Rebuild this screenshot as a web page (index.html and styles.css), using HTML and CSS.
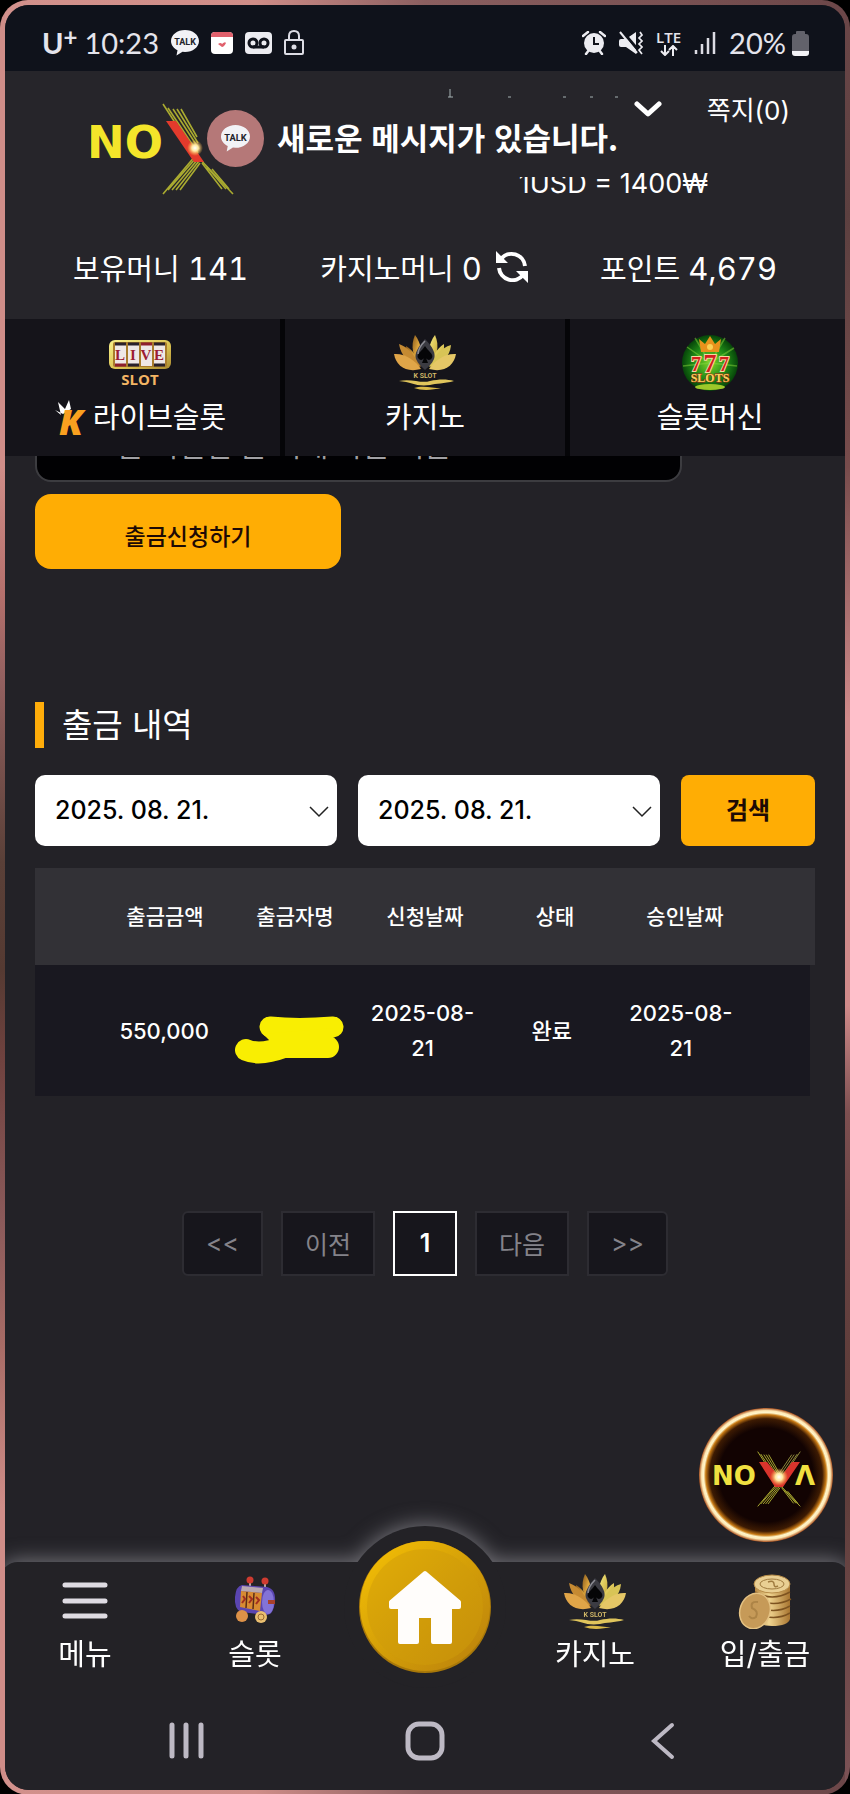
FILE: index.html
```html
<!DOCTYPE html>
<html lang="ko">
<head>
    <meta charset="UTF-8">
    <meta name="viewport" content="width=device-width, initial-scale=1">
    <title>출금 내역</title>
    <link rel="stylesheet" href="styles.css">
</head>
<body>
    <!-- 공용 아이콘 -->
    <svg class="defs" width="0" height="0" aria-hidden="true">
        <defs>
            <linearGradient id="gold" x1="0" y1="0" x2="1" y2="1">
                <stop offset="0" stop-color="#8a5a1c"/>
                <stop offset="0.5" stop-color="#e0a83e"/>
                <stop offset="1" stop-color="#9a6420"/>
            </linearGradient>
            <linearGradient id="goldLight" x1="0" y1="0" x2="1" y2="1">
                <stop offset="0" stop-color="#f7f08a"/>
                <stop offset="0.6" stop-color="#d9c050"/>
                <stop offset="1" stop-color="#a98a30"/>
            </linearGradient>
            <linearGradient id="coin" x1="0" y1="0" x2="1" y2="0">
                <stop offset="0" stop-color="#b98a45"/>
                <stop offset="0.4" stop-color="#f0d591"/>
                <stop offset="1" stop-color="#a87530"/>
            </linearGradient>
            <linearGradient id="homeGold" x1="0" y1="0" x2="1" y2="1">
                <stop offset="0" stop-color="#f7c205"/>
                <stop offset="0.5" stop-color="#d49f08"/>
                <stop offset="1" stop-color="#b97f0c"/>
            </linearGradient>
            <radialGradient id="greenBall">
                <stop offset="0" stop-color="#7fd42a"/>
                <stop offset="0.6" stop-color="#1f8a17"/>
                <stop offset="1" stop-color="#064409"/>
            </radialGradient>
            <radialGradient id="neon">
                <stop offset="0.7" stop-color="#120302"/>
                <stop offset="0.84" stop-color="#3d1b03"/>
                <stop offset="0.9" stop-color="#c87a14"/>
                <stop offset="0.93" stop-color="#fff6cc"/>
                <stop offset="0.96" stop-color="#ffe9b4"/>
                <stop offset="1" stop-color="#a8501e"/>
            </radialGradient>
            <radialGradient id="flare">
                <stop offset="0" stop-color="#ffffff"/>
                <stop offset="0.4" stop-color="#ffe9a0"/>
                <stop offset="1" stop-color="#ffb040" stop-opacity="0"/>
            </radialGradient>
        </defs>
        <symbol id="lotus" viewBox="0 0 62 56">
            <path d="M12 12C19 16 24 24 27 33C19 29 12 22 12 12Z" fill="url(#gold)"/>
            <path d="M21 1C27 9 29 19 27 32C19 24 16 12 21 1Z" fill="url(#gold)"/>
            <path d="M5 10C14 13 22 22 26 33C14 29 7 22 5 10Z" fill="#c58a32"/>
            <path d="M0 20C11 19 22 27 27 35C12 39 2 32 0 20Z" fill="#e0a548"/>
            <path d="M41 1C35 9 33 19 35 32C43 24 46 12 41 1Z" fill="url(#goldLight)"/>
            <path d="M50 10C42 15 38 24 35 33C45 27 51 21 50 10Z" fill="url(#goldLight)"/>
            <path d="M57 11C47 14 40 22 36 33C48 29 56 23 57 11Z" fill="#d8c456"/>
            <path d="M62 20C51 19 40 27 35 35C50 39 60 32 62 20Z" fill="#e5c766"/>
            <path d="M31 5C39 13 42 20 40 25C38 30 34 33 31 36C28 33 24 30 22 25C20 20 24 13 31 5Z" fill="#3b3b42"/>
            <path d="M31 12C34 17 40 20 38 24C36 27 33 26 32 24L34 29H28L30 24C29 26 26 27 24 24C22 20 28 17 31 12Z" fill="#050507"/>
            <path d="M31 7C27 11 24 15 24 20" stroke="#8c8c94" stroke-width="1.5" fill="none"/>
            <text x="31" y="44" text-anchor="middle" class="lotus-text">K SLOT</text>
            <path d="M5 47C18 44 27 50 36 47C45 45 53 45 60 47C50 50 42 49 36 51C22 53 18 48 5 47Z" fill="#e0c55c"/>
            <path d="M20 54C29 51 38 54 47 54C39 56 28 57 20 54Z" fill="#d9b948"/>
        </symbol>
        <symbol id="rays" viewBox="0 0 72 92">
            <g stroke="#a9aa30" stroke-width="1.600" fill="none">
                <path d="M1 1L34 52L71 91M6 5L36 50M11 6L37 46M15 6L36 40M19 6L35 34"/>
                <path d="M1 91L34 52M6 87L34 55M10 87L36 56M14 87L37 58M18 87L38 60"/>
                <path d="M40 60L60 86M45 64L64 86M50 66L67 86"/>
            </g>
        </symbol>
        <symbol id="talk" viewBox="0 0 28 26">
            <path d="M14 0C21.700 0 28 4.800 28 11C28 17.200 21.700 22 14 22L11.500 21.800L5.500 25.500L6.500 20.200C2.600 18.200 0 15 0 11C0 4.800 6.300 0 14 0Z" fill="#f2f2f6"/>
            <text x="14" y="15" text-anchor="middle" class="talk-text">TALK</text>
        </symbol>
    </svg>

    <div class="phone">
    <div class="screen">
    <div class="page">
        <div class="status">
            <div class="status-side">
                <span class="carrier">U<sup>+</sup></span>
                <span class="clock">10:23</span>
                <svg width="28" height="26"><use href="#talk"/></svg>
                <svg width="22" height="22" viewBox="0 0 22 22">
                    <rect width="22" height="22" rx="4" fill="#fff"/>
                    <path d="M0 5V4Q0 0 4 0H18Q22 0 22 4V5Z" fill="#e0606c"/>
                    <path d="M7 12Q10 10 11 12Q14 9 15 11Q13 15 11 15Z" fill="#e0606c"/>
                </svg>
                <svg width="27" height="22" viewBox="0 0 27 22">
                    <rect width="27" height="22" rx="4" fill="#ececf1"/>
                    <circle cx="8" cy="11" r="4" fill="none" stroke="#10131c" stroke-width="3"/>
                    <circle cx="19" cy="11" r="4" fill="none" stroke="#10131c" stroke-width="3"/>
                    <path d="M8 15H19" stroke="#10131c" stroke-width="3"/>
                </svg>
                <svg width="20" height="26" viewBox="0 0 20 26">
                    <rect x="1" y="10" width="18" height="14" rx="1" fill="none" stroke="#dcdce4" stroke-width="2"/>
                    <path d="M5 10V6Q5 1 10 1T15 6V10" fill="none" stroke="#dcdce4" stroke-width="2"/>
                    <circle cx="10" cy="17" r="2.500" fill="#dcdce4"/>
                </svg>
            </div>
            <div class="status-side right">
                <svg width="24" height="24" viewBox="0 0 24 24">
                    <circle cx="12" cy="12" r="10" fill="#ececf1"/>
                    <path d="M12 6V13H17" fill="none" stroke="#10131c" stroke-width="2"/>
                    <path d="M1 5L6 1M23 5L18 1M4 23L7 19M20 23L17 19" stroke="#ececf1" stroke-width="2.500" stroke-linecap="round"/>
                </svg>
                <svg width="24" height="24" viewBox="0 0 24 24">
                    <path d="M0 10Q0 8 2 8H7L17 1V23L7 16H2Q0 16 0 14Z" fill="#ececf1"/>
                    <path d="M3 0L20 20" stroke="#0f121b" stroke-width="3"/>
                    <path d="M1 1L18 22" stroke="#ececf1" stroke-width="2"/>
                    <path d="M21 1L23 4L20 7L23 10L20 13L23 16L20 19L23 23" fill="none" stroke="#ececf1" stroke-width="1.700"/>
                </svg>
                <span class="lte">LTE
                    <svg width="18" height="11" viewBox="0 0 18 11"><path d="M5 0V10M1 6L5 10L9 6M13 11V1M9 5L13 1L17 5" fill="none" stroke="#ececf1" stroke-width="2"/></svg>
                </span>
                <svg width="22" height="24" viewBox="0 0 22 24"><path d="M2 19V23M8 13V23M14 7V23M20 1V23" stroke="#dcdce4" stroke-width="2.500"/></svg>
                <span class="battery-text">20%</span>
                <svg class="battery" width="17" height="25" viewBox="0 0 17 25">
                    <path d="M4 3V1Q4 0 5 0H12Q13 0 13 1V3H14Q17 3 17 6V20H0V6Q0 3 3 3Z" fill="#62626b"/>
                    <path d="M0 20H17V22Q17 25 14 25H3Q0 25 0 22Z" fill="#f2f2f6"/>
                </svg>
            </div>
        </div>

        <header class="header">
            <div class="top">
                <a href="#" class="logo" aria-label="NOVA">
                    <svg width="146" height="92" viewBox="0 0 146 92">
                        <text x="-4" y="55" class="logo-text">NO</text>
                        <svg x="71" y="0" width="72" height="92"><use href="#rays"/></svg>
                        <path d="M75 18H85L113 59H103Z" fill="#e33a2c"/>
                        <circle cx="104" cy="45" r="8" fill="url(#flare)"/>
                    </svg>
                </a>
                <div class="user">
                    <div class="user-row">
                        <svg width="170" height="10" viewBox="0 0 170 10"><path d="M2 1V9M0 9H5M60 9H63M115 9H118M142 9H145M167 9H170" stroke="#a5b3b3" fill="none"/></svg>
                        <button class="toggle" aria-label="열기">
                            <svg width="28" height="17" viewBox="0 0 28 17"><path d="M3 3L14 13L25 3" fill="none" stroke="#fff" stroke-width="5" stroke-linecap="round" stroke-linejoin="round"/></svg>
                        </button>
                        <a href="#" class="message">쪽지(0)</a>
                    </div>
                    <div class="rate">1USD = 1400₩</div>
                </div>
                <div class="toast">
                    <span class="toast-icon"><svg width="29" height="27"><use href="#talk"/></svg></span>
                    <span class="toast-text">새로운 메시지가 있습니다.</span>
                </div>
            </div>
            <div class="money">
                <span>보유머니 <b>141</b></span>
                <span class="casino-money"><span>카지노머니 <b>0</b></span>
                    <button class="refresh" aria-label="새로고침">
                        <svg width="32" height="32" viewBox="0 0 32 32">
                            <path d="M5 8A13.500 13.500 0 0 1 29 15M27 24A13.500 13.500 0 0 1 3 17" fill="none" stroke="#fff" stroke-width="4"/>
                            <path d="M0 0V12H12Z M32 32V20H20Z" fill="#fff"/>
                        </svg>
                    </button>
                </span>
                <span>포인트 <b>4,679</b></span>
            </div>
            <nav class="games">
                <a href="#" class="game">
                    <svg width="62" height="56" viewBox="0 0 62 56">
                        <rect y="6" width="62" height="29" rx="6" fill="url(#goldLight)"/>
                        <rect x="4" y="8" width="54" height="25" rx="2" fill="#a87c2c"/>
                        <g fill="#eee8e6"><rect x="6" y="9" width="11" height="23"/><rect x="19" y="9" width="11" height="23"/><rect x="32" y="9" width="11" height="23"/><rect x="45" y="9" width="11" height="23"/></g>
                        <path d="M6 10H17M19 10H30M45 10H56M19 31H30M45 31H56" stroke="#29212a" stroke-width="3"/>
                        <path d="M32 10H43M6 31H17" stroke="#8d1f2c" stroke-width="3"/>
                        <g class="reel"><text x="11" y="26">L</text><text x="24" y="26">I</text><text x="37" y="26">V</text><text x="50" y="26">E</text></g>
                        <text x="31" y="51" text-anchor="middle" class="slot-text">SLOT</text>
                    </svg>
                    <span class="game-name">
                        <svg width="36" height="36" viewBox="0 0 36 36">
                            <path d="M1 10L7 15L4 2L11 9L15 0L17 9L9 14Z" fill="#fff"/>
                            <text x="5" y="35" class="k-text">K</text>
                        </svg>
                        라이브슬롯
                    </span>
                </a>
                <a href="#" class="game">
                    <svg width="62" height="56"><use href="#lotus"/></svg>
                    <span class="game-name">카지노</span>
                </a>
                <a href="#" class="game">
                    <svg width="58" height="58" viewBox="0 0 58 58">
                        <circle cx="29" cy="29" r="28" fill="url(#greenBall)"/>
                        <path d="M29 29L6 13M29 29L14 4M29 29L44 4M29 29L53 14M29 29L2 32M29 29L56 32" stroke="#86d63a" stroke-width="1.500" opacity="0.5"/>
                        <ellipse cx="29" cy="53" rx="15" ry="3" fill="#9dc82a"/>
                        <path d="M20 18L18 5L24 10L29 2L34 10L40 5L38 18Z" fill="#e8921c"/>
                        <circle cx="29" cy="13" r="3" fill="#f9d052"/>
                        <g class="sevens"><text x="15" y="37" class="seven-side">7</text><text x="43" y="37" class="seven-side">7</text><text x="29" y="38" class="seven-mid">7</text></g>
                        <text x="29" y="48" class="slots-text">SLOTS</text>
                    </svg>
                    <span class="game-name">슬롯머신</span>
                </a>
            </nav>
        </header>

        <main class="content">
            <form class="withdraw">
                <textarea class="notice" aria-label="안내" readonly>본 비밀번 을 기재 하는 이는</textarea>
                <button type="button" class="submit">출금신청하기</button>
            </form>

            <h2 class="title">출금 내역</h2>

            <form class="search">
                <label class="date">
                    <input type="text" value="2025. 08. 21." aria-label="시작일">
                    <svg width="20" height="12" viewBox="0 0 20 12"><path d="M1 1L10 10L19 1" fill="none" stroke="#222" stroke-width="1.500"/></svg>
                </label>
                <label class="date">
                    <input type="text" value="2025. 08. 21." aria-label="종료일">
                    <svg width="20" height="12" viewBox="0 0 20 12"><path d="M1 1L10 10L19 1" fill="none" stroke="#222" stroke-width="1.500"/></svg>
                </label>
                <button type="button" class="search-btn">검색</button>
            </form>

            <table class="history">
                <thead>
                    <tr>
                        <th>출금금액</th>
                        <th>출금자명</th>
                        <th>신청날짜</th>
                        <th>상태</th>
                        <th>승인날짜</th>
                    </tr>
                </thead>
                <tbody>
                    <tr>
                        <td>550,000</td>
                        <td class="masked">
                            <svg width="112" height="48" viewBox="0 0 112 48">
                                <path d="M12 34Q26 40 50 31Q70 31 94 31" fill="none" stroke="#f9ee02" stroke-width="22" stroke-linecap="round"/>
                                <path d="M36 11Q64 14 99 11" fill="none" stroke="#f9ee02" stroke-width="21" stroke-linecap="round"/>
                                <path d="M29 18L45 34H99V12Z" fill="#f9ee02"/>
                            </svg>
                        </td>
                        <td>2025-08-21</td>
                        <td>완료</td>
                        <td>2025-08-21</td>
                    </tr>
                </tbody>
            </table>

            <div class="pages">
                <button class="page-btn first">&lt;&lt;</button>
                <button class="page-btn">이전</button>
                <button class="page-btn on">1</button>
                <button class="page-btn">다음</button>
                <button class="page-btn last">&gt;&gt;</button>
            </div>
        </main>

        <a href="#" class="floating" aria-label="NOVA">
            <svg width="134" height="134" viewBox="0 0 134 134">
                <circle cx="67" cy="67" r="67" fill="url(#neon)"/>
                <text x="13" y="77" class="badge-text">NO</text>
                <text x="96" y="77" class="badge-text">Λ</text>
                <svg x="58" y="43" width="44" height="56"><use href="#rays"/></svg>
                <svg x="58" y="43" width="44" height="56" viewBox="0 0 72 92"><g stroke="#8d8a3c" stroke-width="1.600"><path d="M71 1L36 52M66 5L36 48M61 6L35 44M57 6L34 40"/></g></svg>
                <path d="M60 54H68L81 70L93 54H101L84 79H76Z" fill="#d9342c"/>
                <circle cx="80" cy="69" r="9" fill="url(#flare)"/>
            </svg>
        </a>

        <nav class="bottom">
            <a href="#" class="tab">
                <svg width="46" height="56" viewBox="0 0 46 56"><path d="M3 12H43M3 28H43M3 43H43" stroke="#dedbe2" stroke-width="5" stroke-linecap="round"/></svg>
                메뉴
            </a>
            <a href="#" class="tab">
                <svg width="44" height="56" viewBox="0 0 44 56">
                    <path d="M17 6V16M32 7V18" stroke="#b9a5a0" stroke-width="2"/>
                    <circle cx="17" cy="7" r="3.500" fill="#cf3b30"/><circle cx="32" cy="8" r="3.500" fill="#cf3b30"/>
                    <path d="M9 12L34 14Q43 16 42 29Q40 43 33 42L8 39Q1 36 2 24Q3 13 9 12Z" fill="#5a45b0"/>
                    <ellipse cx="35" cy="29" rx="6" ry="12" fill="#8373d6"/>
                    <path d="M9 13L30 15L29 20L8 18Z" fill="#b8a8b0"/>
                    <path d="M8 18L29 20L27 38L7 34Z" fill="#d88b32"/>
                    <path d="M14 19L13 35M21 20L20 36" stroke="#5a2c18" stroke-width="1.500"/>
                    <path d="M10 23L12 26L9 30M16 23L19 26L16 30M23 24L26 27L23 31" stroke="#a12d20" stroke-width="2" fill="none"/>
                    <path d="M35 29H42" stroke="#a8402c" stroke-width="4"/>
                    <circle cx="9" cy="43" r="6" fill="#dd9248"/><circle cx="28" cy="44" r="6" fill="#eabf70"/>
                    <circle cx="28" cy="44" r="3" fill="none" stroke="#9a6a30"/>
                </svg>
                슬롯
            </a>
            <a href="#" class="home" aria-label="홈">
                <svg width="134" height="134" viewBox="0 0 134 134">
                    <circle cx="67" cy="67" r="66" fill="#a87809"/>
                    <circle cx="67" cy="66" r="65" fill="url(#homeGold)"/>
                    <circle cx="67" cy="67" r="58" fill="#d09c0a" opacity="0.5"/>
                    <path d="M67 33L101 62V67H92V102H75V76H59V102H42V67H33V62Z" fill="#fffdfb" stroke="#fffdfb" stroke-width="4" stroke-linejoin="round"/>
                </svg>
            </a>
            <a href="#" class="tab">
                <svg width="62" height="56"><use href="#lotus"/></svg>
                카지노
            </a>
            <a href="#" class="tab">
                <svg width="54" height="56" viewBox="0 0 54 56">
                    <path d="M17 10H52V46Q50 53 34 53Q20 53 17 46Z" fill="url(#coin)"/>
                    <path d="M17 19Q34 29 52 19M18 26Q36 35 53 26M18 33Q36 42 52 33M18 40Q36 49 52 40" fill="none" stroke="#7d5320" stroke-width="1.500"/>
                    <ellipse cx="34" cy="11" rx="18" ry="9" fill="#e9cf93" stroke="#b78c48"/>
                    <ellipse cx="34" cy="11" rx="12" ry="5" fill="none" stroke="#9f7a3e"/>
                    <path d="M30 9Q36 7 36 11T40 13" fill="none" stroke="#9f7a3e" stroke-width="1.500"/>
                    <ellipse cx="17" cy="38" rx="15" ry="18" fill="#c69a58" stroke="#e4c283" stroke-width="1.500" transform="rotate(20 17 38)"/>
                    <path d="M20 29Q12 28 14 35Q21 38 18 44Q14 47 11 43" fill="none" stroke="#ad8446" stroke-width="2"/>
                </svg>
                입/출금
            </a>
        </nav>

        <div class="system">
            <svg width="36" height="40" viewBox="0 0 36 40"><path d="M4 4V35M18 4V35M33 4V35" stroke="#bdb9c4" stroke-width="5" stroke-linecap="round"/></svg>
            <svg width="40" height="40" viewBox="0 0 40 40"><rect x="3" y="3" width="34" height="34" rx="11" fill="none" stroke="#bdb9c4" stroke-width="5"/></svg>
            <svg width="36" height="40" viewBox="0 0 36 40"><path d="M26 4L8 20L26 36" fill="none" stroke="#bdb9c4" stroke-width="4" stroke-linecap="round"/></svg>
        </div>
    </div>
    </div>
    </div>
</body>
</html>
```

FILE: styles.css
```css
* {
    box-sizing: border-box;
}

body {
    margin: 0;
    background-color: #000;
    font-family: Inter, "Noto Sans CJK KR", sans-serif;
    color: #fff;
}

a {
    color: inherit;
    text-decoration: none;
}

button {
    border: none;
    padding: 0;
    background: none;
    color: inherit;
    font-family: inherit;
    cursor: pointer;
}

svg {
    display: block;
    flex: none;
}

.defs {
    position: absolute;
}

/* phone frame */
.phone {
    padding: 5px;
    border-radius: 28px;
    background:
        linear-gradient(#cf8d88, #cf8d88 26%, #b5706c 33%, #92605f 38%, #5a4038 48%, #553a32 54%, #70423f 59%, #8b5a5a 68%, #a86c66 75%, #cf8d88 84%) left / 5px 100% no-repeat,
        linear-gradient(#6b4648, #5c4040 12%, #784c4c 26%, #d08a8a 40%, #d08a8a 56%, #7d4f50 62%, #6a4444 68%, #5a3a36 80%, #7d5357) right / 5px 100% no-repeat,
        linear-gradient(90deg, #d2918c, #cf8d88 30%, #8b5f60 50%, #6b4648);
}

.screen {
    border-radius: 24px;
    overflow: hidden;
    background-color: #232227;
}

.page {
    margin: 0 -5px;
    position: relative;
}

/* status bar */
.status {
    height: 66px;
    padding: 10px 41px 0 42px;
    display: flex;
    justify-content: space-between;
    align-items: center;
    background-color: #0f121b;
    color: #e4e4ec;
    font-family: Lato, sans-serif;
    font-size: 29px;
    line-height: 36px;
}

.status-side {
    display: flex;
    align-items: center;
    gap: 12px;
}

.carrier {
    font-weight: 700;
}

.carrier sup {
    font-size: 24px;
    line-height: 0;
    vertical-align: 8px;
}

.carrier + .clock {
    margin-left: -5px;
}

.lte {
    font-family: "Open Sans", sans-serif;
    font-size: 15px;
    font-weight: 600;
    line-height: 14px;
}

.lte svg {
    margin: 1px auto 0;
}

.status-side.right {
    gap: 13px;
}

.battery {
    margin-left: -7px;
}

.talk-text {
    font: 700 9px Roboto, sans-serif;
    fill: #22232b;
}

/* header */
.header {
    position: relative;
    z-index: 2;
    background-color: #26252a;
}

.top {
    height: 160px;
    padding: 17px 60px 0 91px;
    display: flex;
    justify-content: space-between;
    position: relative;
}

.logo {
    padding-top: 15px;
}

.logo-text {
    font: 700 45px "DejaVu Sans", sans-serif;
    fill: #f4e52a;
}

.user-row {
    display: flex;
    align-items: flex-start;
    font-size: 26px;
    line-height: 46px;
}

.toggle {
    margin: 13px 45px 0 16px;
}

.rate {
    margin-top: 33px;
    padding-left: 71px;
    font-size: 27px;
    line-height: 34px;
}

.toast {
    position: absolute;
    left: 207px;
    top: 28px;
    display: flex;
    align-items: center;
    gap: 13px;
    font-family: "Noto Sans CJK KR", sans-serif;
    font-size: 31px;
    font-weight: 700;
    line-height: 76px;
}

.toast-text {
    padding-bottom: 2px;
    background-color: #26252a;
}

.toast-icon {
    width: 57px;
    height: 57px;
    border-radius: 50%;
    display: flex;
    align-items: center;
    justify-content: center;
    background-color: #b57878;
}

.money {
    height: 88px;
    padding: 0 73px 16px;
    display: flex;
    justify-content: space-between;
    align-items: center;
    font-size: 29px;
}

.money b {
    font-size: 31px;
    font-weight: 400;
    font-variant-numeric: tabular-nums;
}

.casino-money {
    display: flex;
    align-items: center;
    gap: 14px;
}

/* game menu */
.games {
    display: grid;
    grid-template-columns: repeat(3, 1fr);
    gap: 5px;
    background-color: #050508;
}

.game {
    height: 137px;
    padding: 15px 0 17px;
    display: flex;
    flex-direction: column;
    align-items: center;
    justify-content: space-between;
    background-color: #15141a;
    font-size: 29px;
    line-height: 42px;
}

.game-name {
    display: flex;
    align-items: center;
    gap: 3px;
}

.reel text {
    font: 700 15px "Liberation Serif", serif;
    text-anchor: middle;
    fill: #9c1d33;
}

.slot-text {
    font: 700 15px "Open Sans", sans-serif;
    fill: #f3b564;
}

.k-text {
    font: italic 800 36px "Open Sans", sans-serif;
    fill: #f9a01f;
}

.lotus-text {
    font: 600 7px Roboto, sans-serif;
    fill: #d6bc6a;
}

.sevens text {
    text-anchor: middle;
    fill: #d3201c;
    stroke: #f7d9a0;
    stroke-width: 2px;
    paint-order: stroke;
}

.sevens .seven-side {
    font: 700 20px "Liberation Serif", serif;
}

.sevens .seven-mid {
    font: 700 26px "Liberation Serif", serif;
}

.slots-text {
    font: 700 12px "Liberation Serif", serif;
    text-anchor: middle;
    fill: #f6d55c;
    stroke: #a32613;
    stroke-width: 1px;
    paint-order: stroke;
}

/* content */
.content {
    padding: 0 35px;
}

.withdraw {
    display: flex;
    flex-direction: column;
    align-items: flex-start;
}

.notice {
    width: 83%;
    height: 75px;
    margin: -49px 0 12px;
    padding: 18px 0 0 80px;
    border: 2px solid #3c3c40;
    border-radius: 16px;
    background-color: #010103;
    color: #a0a0a4;
    font-family: "Noto Sans CJK KR", sans-serif;
    font-size: 29px;
    line-height: 34px;
    resize: none;
    overflow: hidden;
}

.submit {
    width: 306px;
    height: 75px;
    padding-top: 6px;
    border-radius: 16px;
    background-color: #ffad04;
    color: #1d0a05;
    font-size: 23px;
    font-weight: 500;
}

.title {
    margin: 133px 0 27px;
    padding-left: 18px;
    border-left: 9px solid #ffad0a;
    font-size: 33px;
    font-weight: 400;
    line-height: 46px;
}

.search {
    display: grid;
    grid-template-columns: 1fr 1fr 134px;
    gap: 21px;
}

.date {
    position: relative;
}

.date input {
    display: block;
    width: 100%;
    height: 71px;
    padding: 0 20px 2px;
    border: none;
    border-radius: 10px;
    background-color: #fff;
    color: #000;
    font-family: inherit;
    font-size: 25px;
    font-weight: 500;
}

.date svg {
    position: absolute;
    right: 8px;
    top: 31px;
}

.search-btn {
    padding-bottom: 4px;
    border-radius: 8px;
    background-color: #ffad04;
    color: #1d0a05;
    font-size: 24px;
    font-weight: 600;
}

/* withdrawal table */
.history {
    display: block;
    margin-top: 22px;
    font-size: 22px;
    font-weight: 500;
    line-height: 35px;
}

.history thead, .history tbody {
    display: block;
}

.history tbody {
    margin-right: 5px;
}

.history tr {
    display: grid;
    grid-template-columns: repeat(5, 1fr);
    align-items: center;
    padding: 31px 8.333%;
    background-color: #191820;
}

.history thead tr {
    background-color: #323136;
    font-size: 21px;
}

.history th, .history td {
    padding: 0;
    font-weight: inherit;
    text-align: center;
}

.history td {
    padding: 0 10px;
    margin-bottom: -1px;
}

.history .masked {
    padding: 18px 0 0 5px;
}

/* paging */
.pages {
    margin: 115px 0 76px;
    display: flex;
    justify-content: center;
    gap: 18px;
}

.page-btn {
    height: 65px;
    padding: 0 22px 2px;
    border: 2px solid #2d2c32;
    background-color: #17161c;
    color: #84838a;
    font-size: 25px;
}

.page-btn.on {
    min-width: 64px;
    border-color: #fff;
    color: #fff;
    font-weight: 600;
}

.first {
    border-radius: 6px 0 0 6px;
}

.last {
    border-radius: 0 6px 6px 0;
}

.floating {
    display: block;
    width: 134px;
    margin: 132px 17px 0 auto;
}

.badge-text {
    font: 700 26px "DejaVu Sans", sans-serif;
    fill: #f0e040;
}

/* bottom menu */
.bottom {
    position: relative;
    height: 138px;
    margin-top: 20px;
    display: grid;
    grid-template-columns: repeat(5, 1fr);
    border-radius: 18px 18px 0 0;
    background-color: #232226;
    filter: drop-shadow(0 -2px 10px #737278);
}

.tab {
    padding-top: 11px;
    display: flex;
    flex-direction: column;
    align-items: center;
    gap: 5px;
    font-size: 29px;
    line-height: 42px;
}

.home {
    justify-self: center;
    align-self: start;
    margin-top: -36px;
    padding: 14px;
    border-radius: 50%;
    background-color: #232226;
}

.system {
    position: relative;
    height: 90px;
    padding: 0 168px 8px;
    display: flex;
    justify-content: space-between;
    align-items: center;
    background-color: #232227;
}
```
